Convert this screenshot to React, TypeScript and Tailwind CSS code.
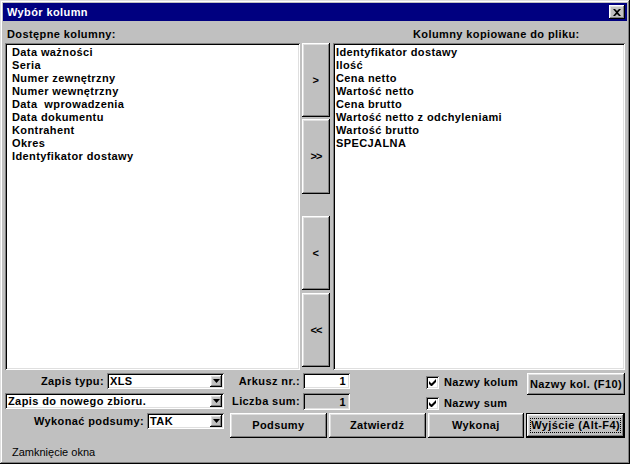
import React from "react"

const raised =
  "shadow-[inset_-1px_-1px_#000000,inset_1px_1px_#ffffff,inset_-2px_-2px_#808080,inset_2px_2px_#dfdfdf]"
const sunken =
  "shadow-[inset_1px_1px_#808080,inset_-1px_-1px_#ffffff,inset_2px_2px_#000000,inset_-2px_-2px_#dfdfdf]"

const available = [
  "Data ważności",
  "Seria",
  "Numer zewnętrzny",
  "Numer wewnętrzny",
  "Data  wprowadzenia",
  "Data dokumentu",
  "Kontrahent",
  "Okres",
  "Identyfikator dostawy",
]

const copied = [
  "Identyfikator dostawy",
  "Ilość",
  "Cena netto",
  "Wartość netto",
  "Cena brutto",
  "Wartość netto z odchyleniami",
  "Wartość brutto",
  "SPECJALNA",
]

function DownArrow() {
  return (
    <svg width="7" height="4" viewBox="0 0 7 4" className="block">
      <path d="M0 0h7L3.5 4z" fill="#000" />
    </svg>
  )
}

function Combo({ value, className }: { value: string; className: string }) {
  return (
    <div className={`flex h-[16px] bg-white p-[2px] ${sunken} ${className}`}>
      <span className="flex-1 pl-[1px] leading-[12px] whitespace-nowrap">{value}</span>
      <div className={`flex w-[12px] items-center justify-center bg-[#c0c0c0] ${raised}`}>
        <DownArrow />
      </div>
    </div>
  )
}

function Check({ label }: { label: string }) {
  return (
    <div className="flex h-[13px] items-center">
      <div className={`flex h-[13px] w-[13px] items-center justify-center bg-white ${sunken}`}>
        <svg width="7" height="7" viewBox="0 0 7 7" className="block">
          <path d="M0 2v3l2 2h1l4-4V0L2.5 4.5z" fill="#000" />
        </svg>
      </div>
      <span className="ml-[5px] leading-[13px]">{label}</span>
    </div>
  )
}

function Btn({ children, className }: { children: React.ReactNode; className: string }) {
  return (
    <div className={`flex items-center justify-center bg-[#c0c0c0] leading-[13px] whitespace-nowrap ${raised} ${className}`}>
      {children}
    </div>
  )
}

export default function App() {
  return (
    <div
      className={`flex h-[464px] w-[630px] flex-col bg-[#c0c0c0] p-[3px] font-['Liberation_Sans',Arial,sans-serif] text-[11px] font-bold tracking-[0.4px] text-black shadow-[inset_-1px_-1px_#000000,inset_1px_1px_#dfdfdf,inset_-2px_-2px_#808080,inset_2px_2px_#ffffff]`}
    >
      {/* title bar */}
      <div className="flex h-[18px] items-center justify-between bg-[#000080] pr-[2px] pl-[4px]">
        <span className="leading-[13px] text-white">Wybór kolumn</span>
        <div className={`flex h-[14px] w-[16px] items-center justify-center bg-[#c0c0c0] ${raised}`}>
          <svg width="8" height="7" viewBox="0 0 8 7" className="block">
            <path d="M0 0h2l2 2 2-2h2L5 3.5 8 7H6L4 5 2 7H0l3-3.5z" fill="#000" />
          </svg>
        </div>
      </div>

      <div className="flex flex-1 flex-col px-[2px]">
        {/* labels */}
        <div className="flex h-[22px] items-end pb-[2px]">
          <div className="w-[295px] pl-[2px] leading-[13px]">Dostępne kolumny:</div>
          <div className="ml-[33px] pl-[80px] leading-[13px]">Kolumny kopiowane do pliku:</div>
        </div>

        {/* lists */}
        <div className="flex h-[327px]">
          <div className={`w-[295px] bg-white pt-[3px] pl-[7px] ${sunken}`}>
            {available.map((t) => (
              <div key={t} className="leading-[13px] whitespace-pre">
                {t}
              </div>
            ))}
          </div>
          <div className="ml-[2px] flex w-[28px] flex-col">
            <Btn className="h-[74px]">&gt;</Btn>
            <Btn className="mt-[2px] h-[75px] tracking-[-1px]">&gt;&gt;</Btn>
            <Btn className="mt-[22px] h-[74px]">&lt;</Btn>
            <Btn className="mt-[3px] h-[74px] tracking-[-1px]">&lt;&lt;</Btn>
          </div>
          <div className={`ml-[3px] flex-1 bg-white pt-[3px] pl-[3px] ${sunken}`}>
            {copied.map((t) => (
              <div key={t} className="leading-[13px] whitespace-pre">
                {t}
              </div>
            ))}
          </div>
        </div>

        {/* options */}
        <div className="mt-[3px] flex">
          <div className="flex w-[219px] flex-col">
            <div className="flex h-[16px] items-center">
              <span className="w-[102px] pr-[3px] text-right leading-[13px]">Zapis typu:</span>
              <Combo value="XLS" className="flex-1" />
            </div>
            <Combo value="Zapis do nowego zbioru." className="mt-[4px] w-full" />
            <div className="mt-[4px] flex h-[16px] items-center">
              <span className="w-[142px] pr-[3px] text-right leading-[13px]">Wykonać podsumy:</span>
              <Combo value="TAK" className="flex-1" />
            </div>
          </div>

          <div className="ml-[6px] flex w-[395px] flex-col">
            <div className="flex h-[40px]">
              <div className="flex w-[70px] flex-col">
                <div className="flex h-[16px] items-center justify-end leading-[13px]">Arkusz nr.:</div>
                <div className="mt-[4px] flex h-[17px] items-center justify-end leading-[13px]">Liczba sum:</div>
              </div>
              <div className="ml-[3px] flex w-[47px] flex-col">
                <div className={`flex h-[16px] items-center justify-end bg-white pr-[4px] leading-[12px] ${sunken}`}>1</div>
                <div className={`mt-[4px] flex h-[17px] items-center justify-end bg-[#c0c0c0] pr-[4px] leading-[12px] ${sunken}`}>1</div>
              </div>
              <div className="ml-[76px] flex w-[101px] flex-col pt-[3px]">
                <Check label="Nazwy kolum" />
                <div className="mt-[8px]">
                  <Check label="Nazwy sum" />
                </div>
              </div>
              <Btn className="h-[22px] w-[98px]">Nazwy kol. (F10)</Btn>
            </div>

            <div className="flex h-[25px] gap-[2px]">
              <Btn className="flex-1">Podsumy</Btn>
              <Btn className="flex-1">Zatwierdź</Btn>
              <Btn className="flex-1">Wykonaj</Btn>
              <div className="flex flex-1 border border-black">
                <Btn className="flex-1">
                  <span className="border border-dotted border-black">Wyjście (Alt-F4)</span>
                </Btn>
              </div>
            </div>
          </div>
        </div>

        {/* status */}
        <div className="flex-1 pt-[8px] pl-[7px] font-normal tracking-[0px] leading-[13px]">Zamknięcie okna</div>
      </div>
    </div>
  )
}
